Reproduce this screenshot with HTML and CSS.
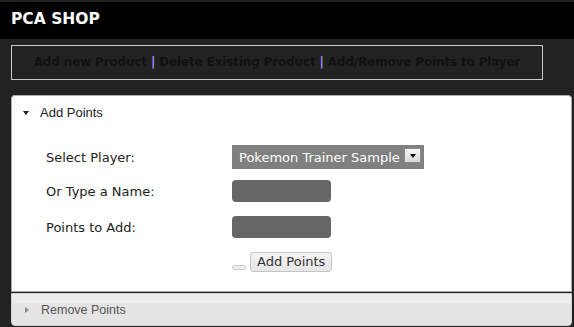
FILE: index.html
```html
<!DOCTYPE html>
<html>
   <head>
      <meta charset="utf-8">
      <title>PCA SHOP</title>
      <link rel="stylesheet" href="styles.css">
   </head>
   <body>
      <div class="topbar">
         <h1 class="title">PCA SHOP</h1>
      </div>

      <div class="nav">
         <a href="#">Add new Product</a> <span class="sep">|</span>
         <a href="#">Delete Existing Product</a> <span class="sep">|</span>
         <a href="#">Add/Remove Points to Player</a>
      </div>

      <div class="accordion">
         <div class="acc-head open">
            <span class="tri-down"></span>Add Points
         </div>
         <div class="acc-body">
            <form action="#" class="points-form">
               <div class="row row1">
                  <label for="player">Select Player:</label>
                  <div class="select-wrap">
                     <select id="player" class="player">
                        <option>Pokemon Trainer Sample</option>
                     </select>
                     <span class="arrow"></span>
                  </div>
               </div>
               <div class="row row2">
                  <label for="pname">Or Type a Name:</label>
                  <input type="text" id="pname" class="field">
               </div>
               <div class="row row3">
                  <label for="pts">Points to Add:</label>
                  <input type="text" id="pts" class="field">
               </div>
               <div class="row row4">
                  <span class="label-space"></span>
                  <span class="tiny"></span>
                  <input type="button" class="btn" value="Add Points">
               </div>
            </form>
         </div>
         <div class="acc-head closed">
            <span class="tri-right"></span>Remove Points
         </div>
      </div>
   </body>
</html>
```

FILE: styles.css
```css
body    { margin: 0; background: #222222; font-family: "DejaVu Sans", Verdana, sans-serif; }

.topbar { margin-top: 2px; height: 37px; background: #000000; }
.title  { margin: 0; padding-left: 11px; font-size: 15.5px; font-weight: bold;
          line-height: 35px; color: #ffffff; }

.nav    { margin: 6px 31px 0 11px; height: 33px; border: 1px solid #c8c8c8; white-space: nowrap;
          text-align: center; line-height: 33px; font-size: 12px; font-weight: bold; letter-spacing: -0.15px; }
.nav a  { color: #111111; text-decoration: none; }
.sep    { color: #a58cff; }

.accordion { margin: 15px 2px 0 11px; }

.acc-head { display: flex; align-items: center; height: 33px; padding-left: 11px;
            font-family: "Liberation Sans", Arial, sans-serif; font-size: 13px; }
.acc-head.open   { background: #ffffff; border: 1px solid #aaaaaa; border-bottom: none;
                   border-radius: 4px 4px 0 0; color: #212121; }
.acc-head.closed { margin-top: 1px; height: 31px; border: 1px solid #d3d3d3; border-radius: 0 0 4px 4px;
                   background: linear-gradient(#ededed 0, #ededed 30%, #e4e4e4 31%, #e4e4e4 100%);
                   color: #555555; font-size: 12.5px; }

.tri-down  { width: 0; height: 0; margin-right: 11px;
             border-left: 3.5px solid transparent; border-right: 3.5px solid transparent;
             border-top: 4px solid #222222; }
.tri-right { width: 0; height: 0; margin-left: 2px; margin-right: 12px;
             border-top: 3.5px solid transparent; border-bottom: 3.5px solid transparent;
             border-left: 4px solid #888888; }

.acc-body { background: #ffffff; border: 1px solid #aaaaaa; border-top: none;
            padding: 16px 0 19px 34px; }

.row    { display: flex; align-items: center; font-size: 13px; color: #222222; }
.row label, .label-space { width: 186px; }
.row1   { height: 24px; margin-bottom: 11px; }
.row2   { height: 22px; margin-bottom: 14px; }
.row3   { height: 22px; margin-bottom: 14px; }
.row4   { height: 20px; }

.select-wrap { position: relative; width: 192px; height: 24px; }
.player { appearance: none; -webkit-appearance: none; width: 192px; height: 24px; margin: 0;
          border: none; border-radius: 0; background: #808080; color: #ffffff; padding: 0 0 0 7px;
          font-family: "DejaVu Sans", Verdana, sans-serif; font-size: 13px; }
.arrow  { position: absolute; top: 3px; right: 3px; width: 15px; height: 13px;
          border: 1px solid #8a8a8a; background: linear-gradient(#f6f6f6, #d8d8d8);
          display: flex; align-items: center; justify-content: center; }
.arrow::after { content: ""; width: 0; height: 0; margin-top: 1px;
                border-left: 3.5px solid transparent; border-right: 3.5px solid transparent;
                border-top: 4px solid #000000; }

.field  { width: 99px; height: 22px; margin: 0; padding: 0; border: none; border-radius: 4px;
          background: #666666; }

.tiny   { width: 12px; height: 3px; margin-top: 11px; margin-right: 4px; border: 1px solid #cccccc;
          border-radius: 2px; background: #eeeeee; }
.btn    { height: 20px; margin: 0; padding: 0 6px; border: 1px solid #c5c5c5; border-radius: 3px;
          background: linear-gradient(#f3f3f3, #e6e6e6); color: #333333;
          font-family: "DejaVu Sans", Verdana, sans-serif; font-size: 13px; line-height: 18px; }
```
